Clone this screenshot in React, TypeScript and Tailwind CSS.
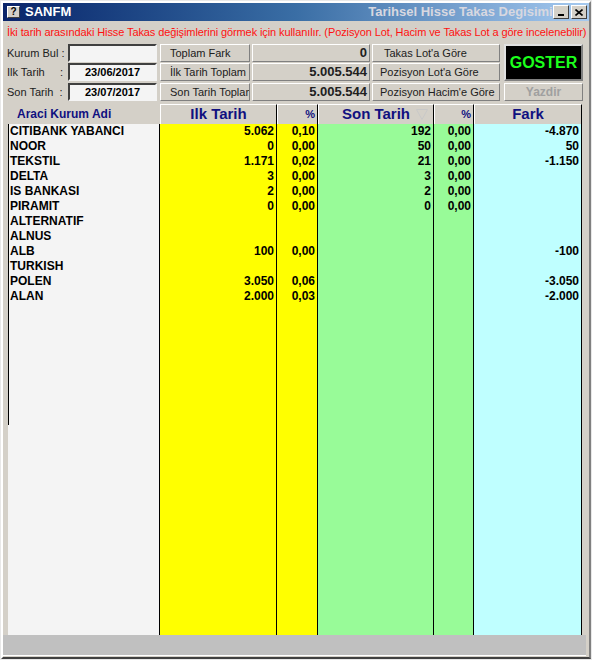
import React from 'react';

type Row = [string, string, string, string, string, string];

const rows: Row[] = [
  ['CITIBANK YABANCI', '5.062', '0,10', '192', '0,00', '-4.870'],
  ['NOOR', '0', '0,00', '50', '0,00', '50'],
  ['TEKSTIL', '1.171', '0,02', '21', '0,00', '-1.150'],
  ['DELTA', '3', '0,00', '3', '0,00', ''],
  ['IS BANKASI', '2', '0,00', '2', '0,00', ''],
  ['PIRAMIT', '0', '0,00', '0', '0,00', ''],
  ['ALTERNATIF', '', '', '', '', ''],
  ['ALNUS', '', '', '', '', ''],
  ['ALB', '100', '0,00', '', '', '-100'],
  ['TURKISH', '', '', '', '', ''],
  ['POLEN', '3.050', '0,06', '', '', '-3.050'],
  ['ALAN', '2.000', '0,03', '', '', '-2.000'],
];

const raised = 'bg-[#d4d0c8] border border-t-white border-l-white border-r-[#808080] border-b-[#808080]';

const Btn = ({ children, className = '' }: { children: React.ReactNode; className?: string }) => (
  <div className={`${raised} h-[18px] flex items-center text-[11px] text-[#202020] whitespace-nowrap overflow-hidden ${className}`}>
    {children}
  </div>
);

const Field = ({ children }: { children?: React.ReactNode }) => (
  <div className="w-[89px] h-[18px] bg-[#f4f4f4] border-2 border-t-[#404040] border-l-[#404040] border-r-[#f4f4f4] border-b-[#f4f4f4] flex items-center justify-center text-[11px] font-bold">
    {children}
  </div>
);

const Label = ({ children }: { children: React.ReactNode }) => (
  <div className="w-[61px] h-[18px] flex items-center text-[11px] text-[#202020] whitespace-pre">{children}</div>
);

const HeadCell = ({ children, className = '' }: { children: React.ReactNode; className?: string }) => (
  <div className={`h-[20px] bg-[#d4d0c8] border-t border-l border-t-white border-l-white border-r border-r-black flex items-center text-[#101080] font-bold ${className}`}>
    {children}
  </div>
);

const Column = ({ idx, bg, width }: { idx: number; bg: string; width: string }) => (
  <div className={`${width} ${bg} border-r border-black flex flex-col`}>
    {rows.map((r, i) => (
      <div key={i} className="h-[15px] leading-[15px] text-right pr-[2px] text-[12px] font-bold text-black">
        {r[idx]}
      </div>
    ))}
  </div>
);

export default function App() {
  return (
    <div className="w-[592px] h-[660px] bg-[#d4d0c8] border border-[#e8e8e8] font-['Liberation_Sans',Arial,sans-serif]">
      <div className="w-full h-full border-2 border-t-white border-l-white border-r-[#808080] border-b-[#404040] flex flex-col">
        {/* title bar */}
        <div className="h-[18px] flex items-center bg-gradient-to-r from-[#0a246a] via-[#3a6ea5] to-[#a6caf0]">
          <div className="ml-[4px] w-[13px] h-[12px] bg-[#d4d0c8] border border-t-white border-l-white border-r-[#404040] border-b-[#404040] flex items-center justify-center text-[10px] font-bold leading-none text-black">
            ?
          </div>
          <div className="ml-[5px] text-white font-bold text-[13px]">SANFM</div>
          <div className="flex-1 overflow-hidden whitespace-nowrap pl-[297px] text-[13px] font-bold text-[#d8d8e0]">
            Tarihsel Hisse Takas Degisimi
          </div>
          <div className="flex gap-[2px] mr-[2px]">
            <div className="w-[16px] h-[14px] bg-[#d4d0c8] border border-t-white border-l-white border-r-[#404040] border-b-[#404040] flex items-end justify-center pb-[2px]">
              <div className="w-[6px] h-[2px] bg-black" />
            </div>
            <div className="w-[16px] h-[14px] bg-[#d4d0c8] border border-t-white border-l-white border-r-[#404040] border-b-[#404040] flex items-center justify-center">
              <svg width="8" height="7" viewBox="0 0 8 7">
                <path d="M0.5 0.5 L7.5 6.5 M7.5 0.5 L0.5 6.5" stroke="black" strokeWidth="1.6" />
              </svg>
            </div>
          </div>
        </div>

        {/* info text */}
        <div className="h-[22px] flex items-center pl-[4px] text-[11px] text-[#ff1010] whitespace-nowrap tracking-[-0.1px]">
          İki tarih arasındaki Hisse Takas değişimlerini görmek için kullanılır. (Pozisyon Lot, Hacim ve Takas Lot a göre incelenebilir)
        </div>

        {/* controls */}
        <div className="flex pl-[4px] mt-[1px]">
          <div className="flex gap-[3px]">
            <div className="flex flex-col">
              <div className="flex">
                <Label>Kurum Bul :</Label>
                <Field />
              </div>
              <div className="flex mt-[1px]">
                <Label>{'Ilk Tarih     :'}</Label>
                <Field>23/06/2017</Field>
              </div>
              <div className="flex mt-[2px]">
                <Label>{'Son Tarih  :'}</Label>
                <Field>23/07/2017</Field>
              </div>
            </div>
            <div className="flex flex-col">
              <div className="flex gap-[2px]">
                <Btn className="w-[90px] pl-[9px]">Toplam Fark</Btn>
                <Btn className="w-[118px] justify-end pr-[2px] text-[13px] font-bold">0</Btn>
                <Btn className="w-[128px] pl-[11px]">Takas Lot'a Göre</Btn>
              </div>
              <div className="flex gap-[2px] mt-[1px]">
                <Btn className="w-[90px] pl-[9px]">İlk Tarih Toplam</Btn>
                <Btn className="w-[118px] justify-end pr-[2px] text-[13px] font-bold">5.005.544</Btn>
                <Btn className="w-[128px] pl-[7px]">Pozisyon Lot'a Göre</Btn>
              </div>
              <div className="flex gap-[2px] mt-[2px]">
                <Btn className="w-[90px] pl-[9px]">Son Tarih Toplam</Btn>
                <Btn className="w-[118px] justify-end pr-[2px] text-[13px] font-bold">5.005.544</Btn>
                <Btn className="w-[128px] pl-[7px]">Pozisyon Hacim'e Göre</Btn>
              </div>
            </div>
          </div>
          <div className="ml-[4px] flex flex-col gap-[2px]">
            <div className="w-[79px] h-[37px] bg-black border-2 border-t-[#e0e0e0] border-l-[#e0e0e0] border-r-[#808080] border-b-[#808080] flex items-center justify-center text-[#1cff1c] font-bold text-[16px]">
              GOSTER
            </div>
            <div className={`${raised} w-[79px] h-[18px] flex items-center justify-center text-[12px] font-bold text-[#a0a0a0]`}>
              Yazdir
            </div>
          </div>
        </div>

        {/* table */}
        <div className="mt-[3px] ml-[5px] flex flex-col flex-1">
          <div className="flex">
            <div className="w-[152px] h-[20px] flex items-center pl-[9px] text-[12px] font-bold text-[#101080]">
              Araci Kurum Adi
            </div>
            <HeadCell className="w-[117px] justify-center text-[15px]">Ilk Tarih</HeadCell>
            <HeadCell className="w-[41px] justify-end pr-[2px] text-[11px]">%</HeadCell>
            <HeadCell className="w-[116px] justify-center text-[15px] gap-[6px]">
              <span className="ml-[18px]">Son Tarih</span>
              <svg width="12" height="11" viewBox="0 0 12 11">
                <path d="M0.5 0.5 L11.5 0.5 L6 10.5 Z" fill="none" stroke="#c8c8c8" strokeWidth="1" />
              </svg>
            </HeadCell>
            <HeadCell className="w-[40px] justify-end pr-[2px] text-[11px]">%</HeadCell>
            <HeadCell className="w-[108px] justify-center text-[15px]">Fark</HeadCell>
          </div>
          <div className="flex h-[511px]">
            <div className="w-[152px] bg-[#f4f4f4] border-r border-black flex">
              <div className="w-[1px] flex flex-col">
                <div className="h-[301px] bg-black" />
              </div>
              <div className="flex-1 flex flex-col">
                {rows.map((r, i) => (
                  <div key={i} className="h-[15px] leading-[15px] pl-[1px] text-[12px] font-bold text-black whitespace-nowrap">
                    {r[0]}
                  </div>
                ))}
              </div>
            </div>
            <Column idx={1} bg="bg-[#ffff00]" width="w-[117px]" />
            <Column idx={2} bg="bg-[#ffff00]" width="w-[41px]" />
            <Column idx={3} bg="bg-[#98fb98]" width="w-[116px]" />
            <Column idx={4} bg="bg-[#98fb98]" width="w-[40px]" />
            <Column idx={5} bg="bg-[#bfffff]" width="w-[108px]" />
          </div>
          <div className="flex-1 bg-[#c0c0c0] -ml-[5px] mr-[3px] mb-[1px] border-b border-white" />
        </div>
      </div>
    </div>
  );
}
